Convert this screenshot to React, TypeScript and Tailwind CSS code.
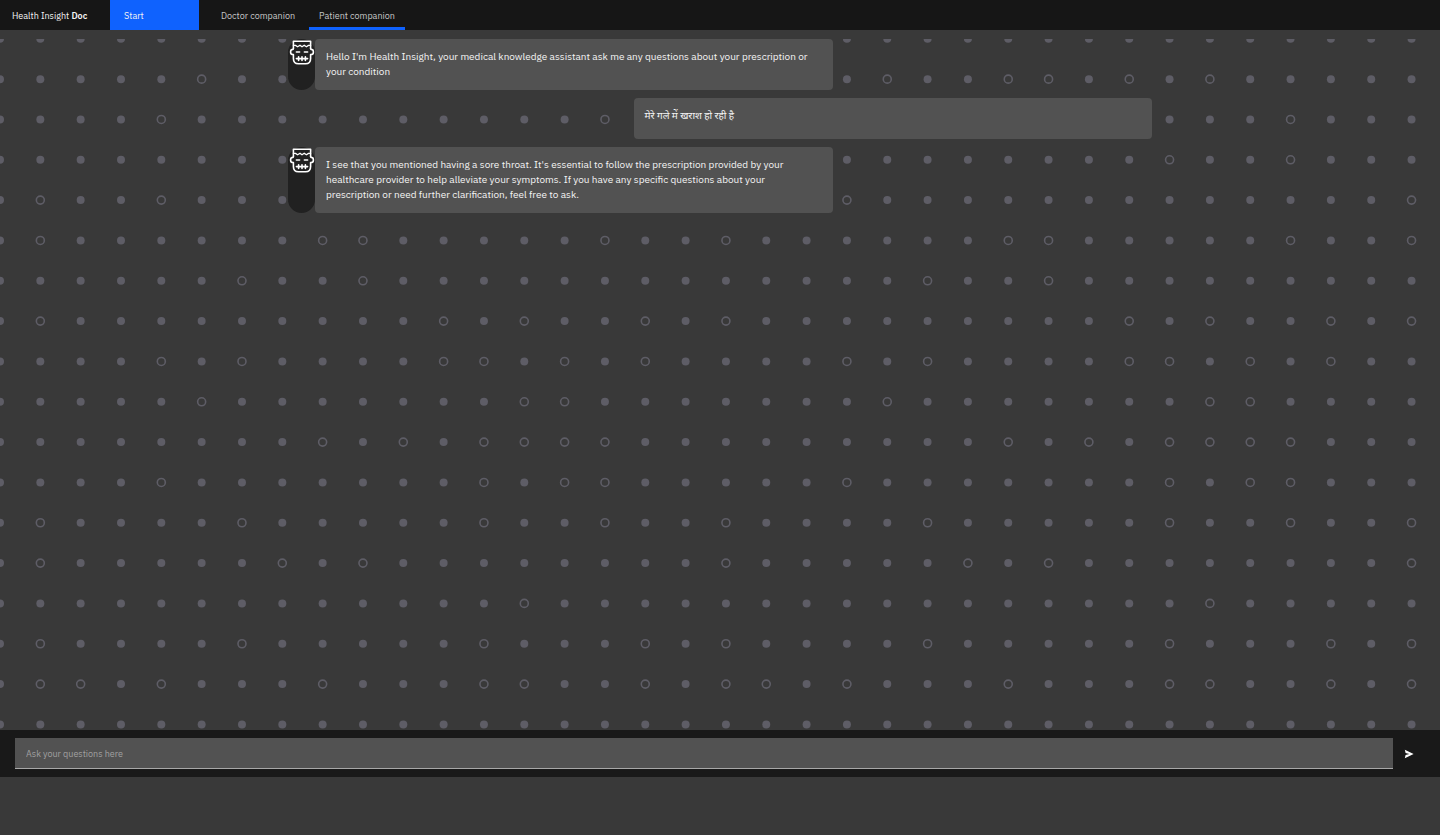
import { useState } from "react";

const GRID = 40.33;
const COLS = 36;

// columns drawn as open rings, one list per row
const RINGS: number[][] = [
  [],
  [5, 22, 25, 26, 28, 30],
  [4, 15, 32],
  [29, 32],
  [1, 4, 21, 35],
  [1, 8, 9, 15, 18, 25, 26, 32, 35],
  [6, 9, 23, 26],
  [1, 11, 13, 16, 18, 28, 30, 33, 35],
  [4, 6, 11, 12, 14, 16, 21, 23, 28, 29, 31, 33],
  [5, 13, 14, 22, 30, 31],
  [8, 10, 12, 13, 14, 15, 25, 27, 29, 30, 31, 32],
  [4, 12, 14, 15, 21, 29, 31, 32],
  [1, 6, 12, 15, 18, 23, 29, 32, 35],
  [1, 7, 9, 18, 24, 26, 35],
  [13, 30],
  [1, 6, 12, 16, 18, 23, 29, 33, 35],
  [1, 2, 4, 8, 12, 13, 16, 18, 19, 21, 25, 29, 30, 33, 35],
  [],
];

const MESSAGES = [
  {
    from: "bot",
    text: "Hello I'm Health Insight, your medical knowledge assistant ask me any questions about your prescription or your condition",
  },
  { from: "user", text: "मेरे गले में खराश हो रही है" },
  {
    from: "bot",
    text: "I see that you mentioned having a sore throat. It's essential to follow the prescription provided by your healthcare provider to help alleviate your symptoms. If you have any specific questions about your prescription or need further clarification, feel free to ask.",
  },
];

export default function App() {
  const [question, setQuestion] = useState("");

  return (
    <div className="flex min-h-screen flex-col bg-[#393939] pb-[58px] font-['IBM_Plex_Sans','Noto_Sans','Noto_Sans_Devanagari',sans-serif] text-[#f4f4f4]">
      {/* HEADER */}
      <header className="flex h-[30px] items-stretch bg-[#161616] text-[9px]">
        <a href="#" className="flex w-[110px] items-center pt-px pl-3 whitespace-pre">
          Health Insight <span className="font-semibold">Doc</span>
        </a>
        <button className="w-[89px] bg-[#0f62fe] pt-px pl-[14px] text-left">Start</button>
        <nav className="ml-3 flex gap-1 text-[#c6c6c6]">
          <NavLink label="Doctor companion" />
          <NavLink label="Patient companion" active />
        </nav>
      </header>

      {/* CHAT */}
      <main className="relative mt-[9px] flex-1 overflow-hidden">
        <Dots />
        <div className="relative mx-auto flex w-3/5 flex-col gap-2">
          {MESSAGES.map((m) => (
            <Message key={m.text} from={m.from} text={m.text} />
          ))}
        </div>
      </main>

      {/* INPUT */}
      <form
        className="flex h-[47px] items-start bg-[#191919] pt-2 pl-[15px]"
        onSubmit={(e) => e.preventDefault()}
      >
        <input
          aria-label="Ask your questions here"
          placeholder="Ask your questions here"
          value={question}
          onChange={(e) => setQuestion(e.target.value)}
          className="h-[31px] min-w-0 flex-1 border-b border-[#a8a8a8] bg-[#525252] px-[11px] text-[9px] outline-none placeholder:text-[#a0a0a0]"
        />
        <button aria-label="Send" className="flex h-[31px] w-[47px] items-center pl-[11px]">
          <svg viewBox="0 0 10 10" className="size-[10px] fill-white">
            <path d="M.8.8 9.6 5 .8 9.2 1.6 5.9 5.4 5 1.6 4.1Z" />
          </svg>
        </button>
      </form>
    </div>
  );
}

/* COMPONENTS */

function NavLink({ label, active = false }: { label: string; active?: boolean }) {
  return (
    <a
      href="#"
      className={`flex items-center border-b-[3px] px-[10px] pt-1 ${
        active ? "border-b-[#0f62fe]" : "border-b-transparent"
      }`}
    >
      {label}
    </a>
  );
}

function Message({ from, text }: { from: string; text: string }) {
  const bot = from === "bot";
  return (
    <div className={`flex ${bot ? "" : "justify-end"}`}>
      {bot && (
        <div className="flex w-[27px] shrink-0 justify-center rounded-full bg-[#212121] pt-px">
          <Avatar />
        </div>
      )}
      <p className="min-h-[41px] w-3/5 rounded-[4px] bg-[#525252] pt-[10px] pr-5 pb-[11px] pl-[11px] text-[10px] leading-[15px]">
        {text}
      </p>
    </div>
  );
}

function Avatar() {
  return (
    <svg
      viewBox="0 0 26 26"
      className="size-[26px] shrink-0 fill-none stroke-white"
      strokeWidth="1.6"
      strokeLinejoin="round"
      strokeLinecap="round"
    >
      <path d="M4.4 8.5V1.2H21.6V8.5" />
      <path d="M4.4 5.4H6.5L8.6 6.8 11 5.2 13 6.8 15.2 5.2 17.4 6.8 19.5 5.4H21.6" strokeWidth="1.3" />
      <path d="M4.4 8.5Q4.4 9.6 3 9.6 1.6 9.6 1.6 12.2 1.6 14.6 4.4 14.6V18.5Q4.4 23.8 9.5 23.8H16.5Q21.6 23.8 21.6 18.5V14.6Q24.4 14.6 24.4 12.2 24.4 9.6 23 9.6 21.6 9.6 21.6 8.5" />
      <path d="M7.4 12H10.6M15.4 12H18.6" />
      <path d="M7.4 18.6H18.6M9.6 16.8V20.4M13 16.8V20.4M16.4 16.8V20.4" />
    </svg>
  );
}

function Dots() {
  return (
    <svg aria-hidden="true" className="absolute inset-0 h-full w-full">
      {RINGS.map((rings, row) =>
        Array.from({ length: COLS }, (_, col) => {
          const ring = rings.includes(col);
          return (
            <circle
              key={`${row}-${col}`}
              cx={col * GRID}
              cy={row * GRID - 0.2}
              r={4}
              fill={ring ? "none" : "#5e5d66"}
              stroke={ring ? "#5e5d66" : "none"}
              strokeWidth={1.6}
            />
          );
        })
      )}
    </svg>
  );
}
